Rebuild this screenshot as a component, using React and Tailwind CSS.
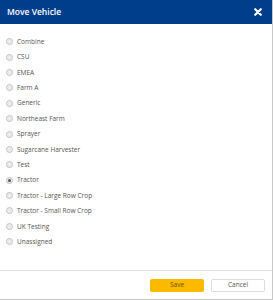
import { useState } from 'react';

const groups = [
  'Combine',
  'CSU',
  'EMEA',
  'Farm A',
  'Generic',
  'Northeast Farm',
  'Sprayer',
  'Sugarcane Harvester',
  'Test',
  'Tractor',
  'Tractor - Large Row Crop',
  'Tractor - Small Row Crop',
  'UK Testing',
  'Unassigned',
];

export default function App() {
  const [selected, setSelected] = useState('Tractor');

  return (
    <div className="w-[273px] h-[300px] bg-white flex flex-col border-r border-b border-[#c8c8c8] font-['Open_Sans',sans-serif]">
      <div className="h-[24px] bg-[#003d8b] flex items-center justify-between pl-[7px] pr-[10px] shrink-0">
        <span className="text-white text-[8.5px] font-semibold">Move Vehicle</span>
        <svg width="8" height="8" viewBox="0 0 10 10">
          <path d="M1.5 1.5 L8.5 8.5 M8.5 1.5 L1.5 8.5" stroke="white" strokeWidth="2.6" strokeLinecap="round" />
        </svg>
      </div>

      <div className="flex-1 pt-[10px] pl-[6px] flex flex-col">
        {groups.map((g) => (
          <label key={g} className="h-[15.4px] flex items-center gap-[4px] cursor-pointer" onClick={() => setSelected(g)}>
            <span className="w-[7px] h-[7px] rounded-full border border-[#c4c4c4] bg-[#ececec] flex items-center justify-center">
              {selected === g && <span className="w-[3px] h-[3px] rounded-full bg-[#555]" />}
            </span>
            <span className="text-[6.5px] text-[#555]">{g}</span>
          </label>
        ))}
      </div>

      <div className="h-[29px] border-t border-[#e3e3e3] flex items-center justify-end gap-[7px] pr-[7px] shrink-0">
        <button className="w-[54px] h-[13px] rounded-[2px] bg-[#fbb900] text-[6.5px] text-[#6b5300]">Save</button>
        <button className="w-[54px] h-[13px] rounded-[2px] border border-[#ddd] bg-white text-[6.5px] text-[#555]">Cancel</button>
      </div>
    </div>
  );
}
